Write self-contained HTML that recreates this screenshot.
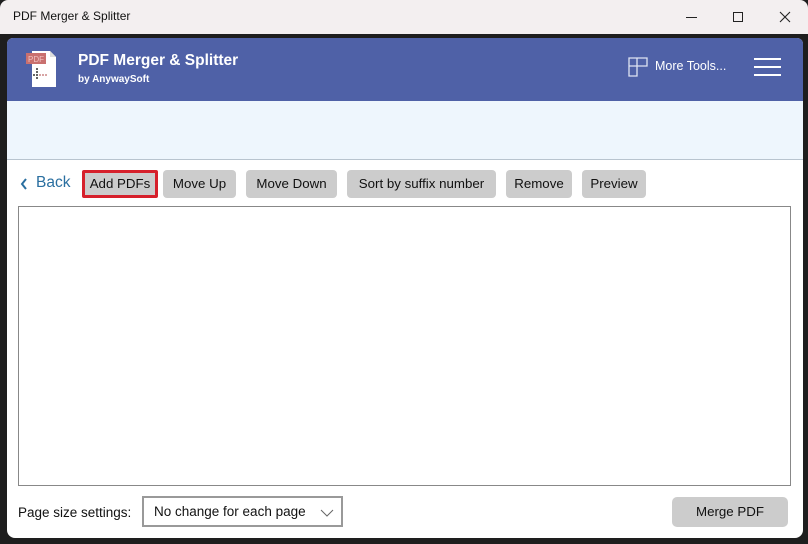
<!DOCTYPE html>
<html><head><style>
*{margin:0;padding:0;box-sizing:border-box}
body{width:808px;height:544px;overflow:hidden;background:#1e1e1e;font-family:"Segoe UI","Liberation Sans",sans-serif;position:relative}
.title{position:absolute;left:0;top:0;width:808px;height:34px;background:#f3eff0;border-radius:8px 8px 0 0}
.title span{position:absolute;left:13px;top:9px;font-size:12px;color:#111}
.app{position:absolute;left:7px;top:38px;width:796px;height:500px;background:#fff;border-radius:6px 6px 8px 8px;overflow:hidden}
.hdr{position:absolute;left:0;top:0;width:796px;height:63px;background:#4f61a7}
.band{position:absolute;left:0;top:63px;width:796px;height:59px;background:#eef6fd;border-bottom:1px solid #b8c4cf}
.btn{position:absolute;top:132px;height:28px;background:#cccccc;border-radius:4px;font-size:13.3px;color:#111;text-align:center;line-height:28px}
.abs{position:absolute}
</style></head><body>
<div class="title"><span>PDF Merger &amp; Splitter</span>
<div class="abs" style="left:686px;top:17px;width:11px;height:1px;background:#222"></div>
<div class="abs" style="left:733px;top:12px;width:10px;height:10px;border:1px solid #222"></div>
<svg class="abs" style="left:779px;top:11px" width="12" height="12"><path d="M1 1L11 11M11 1L1 11" stroke="#222" stroke-width="1.1"/></svg>
</div>
<div class="app">
<div class="hdr">
<svg class="abs" style="left:17px;top:12px" width="36" height="40">
<path d="M8 1H26L32 7V37H8Z" fill="#fff"/><path d="M26 1V7H32" fill="#ddd"/>
<rect x="2" y="3" width="20" height="11" fill="#c9706f"/><text x="4" y="12" font-size="8" fill="#f0c0c0" font-family="Liberation Sans">PDF</text>
<circle cx="13" cy="19" r="1" fill="#333"/><circle cx="13" cy="22" r="1" fill="#333"/><circle cx="10" cy="25" r="1" fill="#333"/><circle cx="13" cy="25" r="1" fill="#333"/><circle cx="16" cy="25" r="1" fill="#c88"/><circle cx="19" cy="25" r="1" fill="#c88"/><circle cx="22" cy="25" r="1" fill="#c88"/><circle cx="13" cy="28" r="1" fill="#333"/>
</svg>
<div class="abs" style="left:71px;top:14px;font-size:15.5px;font-weight:bold;color:#fff">PDF Merger &amp; Splitter</div>
<div class="abs" style="left:71px;top:36px;font-size:10px;font-weight:bold;color:#fff">by AnywaySoft</div>
<svg class="abs" style="left:621px;top:19px" width="20" height="20"><path d="M1 1H9V9H1ZM9 1H19V9H9M1 9V19H9V9" fill="none" stroke="#dfe4f3" stroke-width="1.3"/></svg>
<div class="abs" style="left:648px;top:21px;font-size:12.5px;color:#fff">More Tools...</div>
<div class="abs" style="left:747px;top:20px;width:27px;height:2px;background:#fff"></div>
<div class="abs" style="left:747px;top:28px;width:27px;height:2px;background:#fff"></div>
<div class="abs" style="left:747px;top:36px;width:27px;height:2px;background:#fff"></div>
</div>
<div class="band"></div>
<svg class="abs" style="left:13px;top:140px" width="8" height="12"><path d="M6 1L2 6L6 11" fill="none" stroke="#2a6fa0" stroke-width="2"/></svg>
<div class="abs" style="left:29px;top:136px;font-size:15.5px;color:#2a6fa0">Back</div>
<div class="btn" style="left:75px;width:76px;border:3px solid #d6202b;line-height:22px;border-radius:2px">Add PDFs</div>
<div class="btn" style="left:156px;width:73px">Move Up</div>
<div class="btn" style="left:239px;width:91px">Move Down</div>
<div class="btn" style="left:340px;width:149px">Sort by suffix number</div>
<div class="btn" style="left:499px;width:66px">Remove</div>
<div class="btn" style="left:575px;width:64px">Preview</div>
<div class="abs" style="left:11px;top:168px;width:773px;height:280px;border:1px solid #888"></div>
<div class="abs" style="left:11px;top:467px;font-size:13.5px;color:#111">Page size settings:</div>
<div class="abs" style="left:135px;top:458px;width:201px;height:31px;border:2px solid #999;font-size:13.5px;color:#111;padding:6px 0 0 10px">No change for each page
<svg class="abs" style="left:176px;top:11px" width="14" height="8"><path d="M1 1L7 7L13 1" fill="none" stroke="#666"/></svg></div>
<div class="btn" style="left:665px;top:459px;width:116px;height:30px;line-height:30px;border-radius:5px">Merge PDF</div>
</div>
</body></html>
